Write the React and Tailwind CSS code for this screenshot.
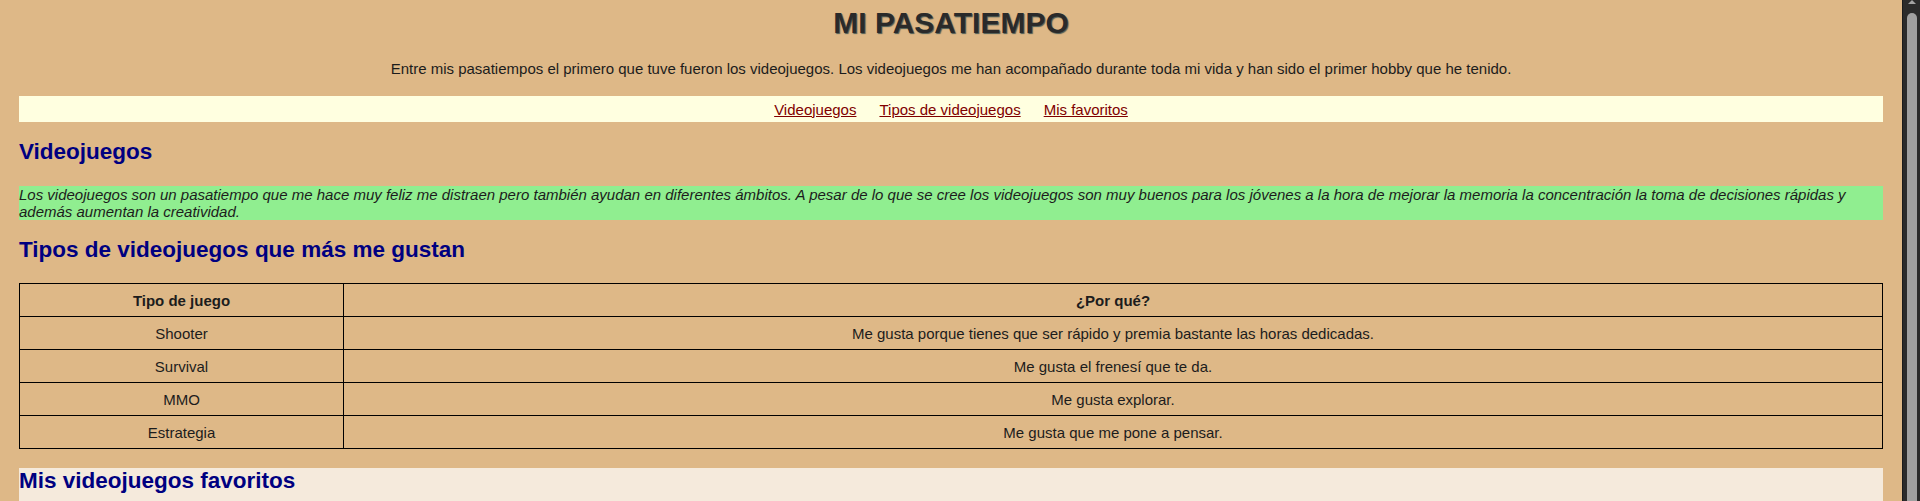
export default function App() {
  const rows = [
    ["Shooter", "Me gusta porque tienes que ser rápido y premia bastante las horas dedicadas."],
    ["Survival", "Me gusta el frenesí que te da."],
    ["MMO", "Me gusta explorar."],
    ["Estrategia", "Me gusta que me pone a pensar."],
  ];
  return (
    <div className="flex h-[501px] overflow-hidden bg-[#deb887] text-[#1c1c1c] font-['Liberation_Sans',Arial,sans-serif] text-[15px] leading-[17px]">
      <main className="flex-1 min-w-0 px-[19px]">
        <h1 className="mt-[6px] text-center text-[30px] leading-[34px] font-bold text-[#2a2a2a] [text-shadow:1px_1px_1px_#4a5a55]">
          MI PASATIEMPO
        </h1>
        <p className="mt-[20px] text-center">
          Entre mis pasatiempos el primero que tuve fueron los videojuegos. Los videojuegos me han acompañado durante toda mi vida y han sido el primer hobby que he tenido.
        </p>
        <nav className="mt-[19px] h-[26px] bg-[#ffffe0] flex items-center justify-center gap-[23px]">
          <a href="#videojuegos" className="text-[#800000] underline">Videojuegos</a>
          <a href="#tipos" className="text-[#800000] underline">Tipos de videojuegos</a>
          <a href="#favoritos" className="text-[#800000] underline">Mis favoritos</a>
        </nav>
        <h2 id="videojuegos" className="mt-[17px] text-[22.5px] leading-[25px] font-bold text-[#000080]">
          Videojuegos
        </h2>
        <p className="mt-[22px] bg-[#90ee90] italic">
          Los videojuegos son un pasatiempo que me hace muy feliz me distraen pero también ayudan en diferentes ámbitos. A pesar de lo que se cree los videojuegos son muy buenos para los jóvenes a la hora de mejorar la memoria la concentración la toma de decisiones rápidas y además aumentan la creatividad.
        </p>
        <h2 id="tipos" className="mt-[17px] text-[22.5px] leading-[25px] font-bold text-[#000080]">
          Tipos de videojuegos que más me gustan
        </h2>
        <table className="mt-[21px] w-full border-collapse border border-black">
          <thead>
            <tr>
              <th className="w-[324px] border border-black py-[7.5px] font-bold text-center">Tipo de juego</th>
              <th className="border border-black py-[7.5px] font-bold text-center">¿Por qué?</th>
            </tr>
          </thead>
          <tbody>
            {rows.map(([a, b]) => (
              <tr key={a}>
                <td className="border border-black py-[7.5px] text-center">{a}</td>
                <td className="border border-black py-[7.5px] text-center">{b}</td>
              </tr>
            ))}
          </tbody>
        </table>
        <section id="favoritos" className="mt-[19px] bg-[#f5eadc] pb-[20px]">
          <h2 className="text-[22.5px] leading-[25px] font-bold text-[#000080]">Mis videojuegos favoritos</h2>
          <ul className="mt-[16px] list-disc pl-[40px]">
            <li>Counter-Strike</li>
            <li>Minecraft</li>
            <li>World of Warcraft</li>
            <li>Age of Empires</li>
          </ul>
        </section>
      </main>
      <aside className="w-[18px] shrink-0 bg-[#2b2b2b] border-l border-[#1a1a1a] flex flex-col items-center">
        <div className="w-0 h-0 border-l-[4px] border-r-[4px] border-b-[4px] border-l-transparent border-r-transparent border-b-[#a3a3a3] mt-[0px]"></div>
        <div className="mt-[9px] w-[10px] flex-1 rounded-t-full bg-[#a0a0a0]"></div>
      </aside>
    </div>
  );
}
